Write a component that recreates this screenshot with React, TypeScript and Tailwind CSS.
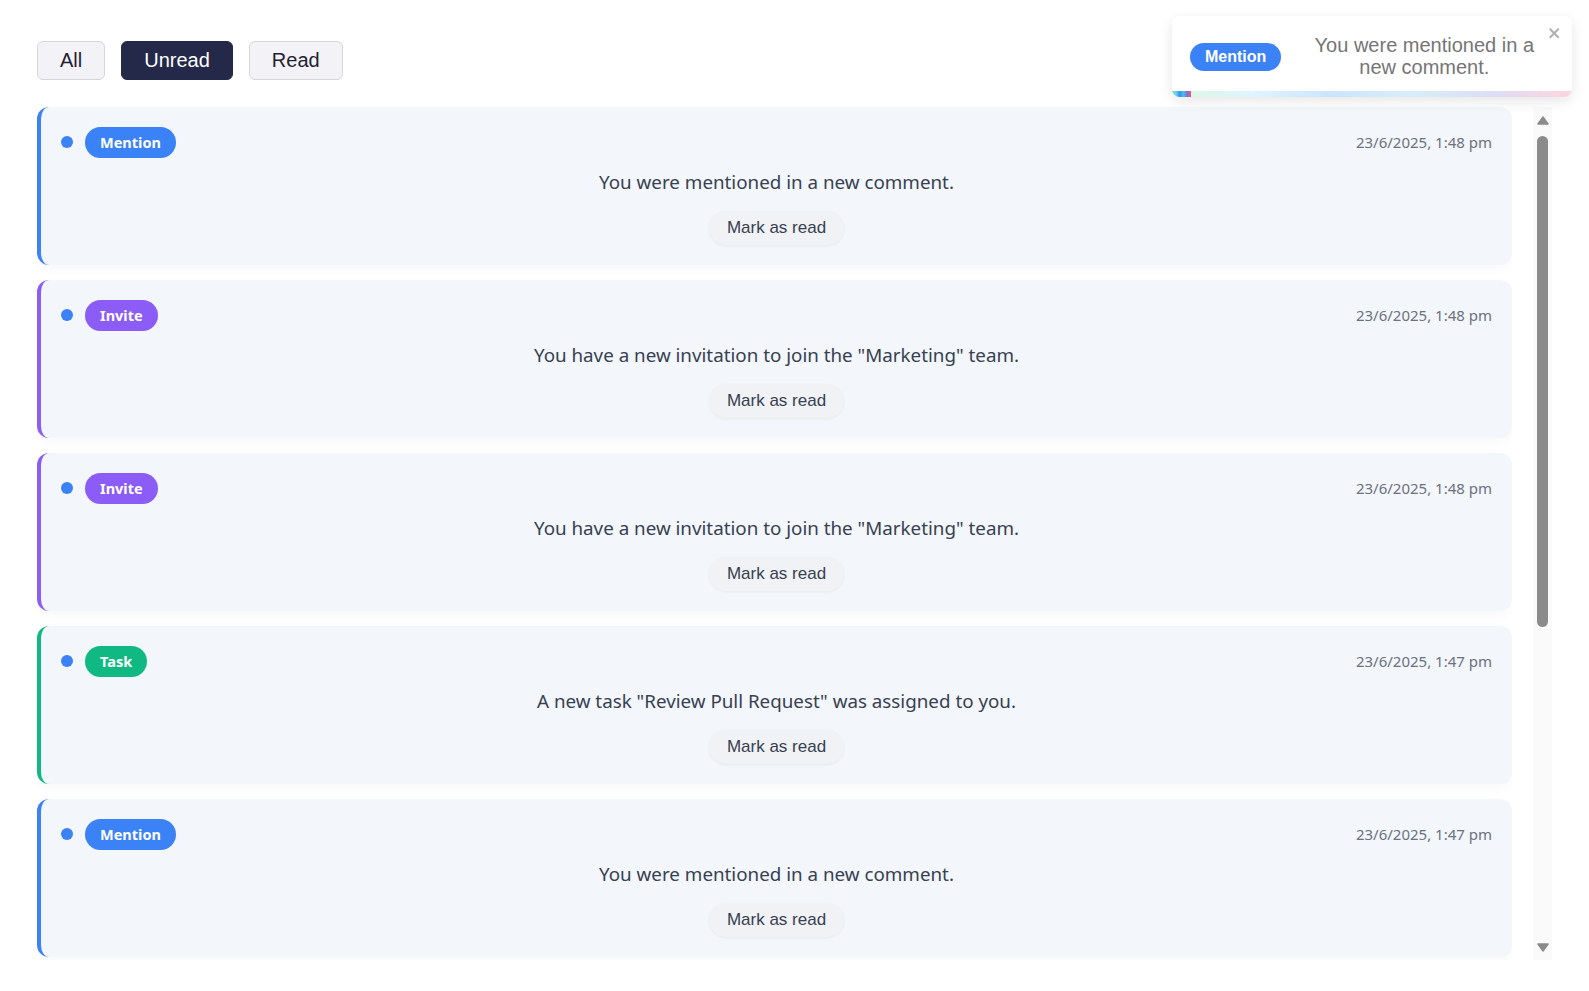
import { useState } from "react";

type Kind = "Mention" | "Invite" | "Task";

const kindStyles: Record<Kind, { border: string; badge: string }> = {
  Mention: { border: "border-l-[#3b82f6]", badge: "bg-[#3b82f6]" },
  Invite: { border: "border-l-[#8b5cf6]", badge: "bg-[#8b5cf6]" },
  Task: { border: "border-l-[#10b981]", badge: "bg-[#10b981]" },
};

const notifications: { id: number; kind: Kind; message: string; time: string }[] = [
  { id: 1, kind: "Mention", message: "You were mentioned in a new comment.", time: "23/6/2025, 1:48 pm" },
  { id: 2, kind: "Invite", message: 'You have a new invitation to join the "Marketing" team.', time: "23/6/2025, 1:48 pm" },
  { id: 3, kind: "Invite", message: 'You have a new invitation to join the "Marketing" team.', time: "23/6/2025, 1:48 pm" },
  { id: 4, kind: "Task", message: 'A new task "Review Pull Request" was assigned to you.', time: "23/6/2025, 1:47 pm" },
  { id: 5, kind: "Mention", message: "You were mentioned in a new comment.", time: "23/6/2025, 1:47 pm" },
];

const filters = ["All", "Unread", "Read"];

const Arrow = ({ down }: { down?: boolean }) => (
  <div className="h-[26px] flex items-center justify-center">
    <svg width="12" height="9" viewBox="0 0 12 9" aria-hidden="true" className={down ? "rotate-180" : ""}>
      <path d="M6 1 L11 8 L1 8 Z" fill="#8b8b8b" stroke="#8b8b8b" strokeWidth="1.5" strokeLinejoin="round" />
    </svg>
  </div>
);

const Toast = () => (
  <div className="absolute top-4 right-[17px] w-[400px] h-[81px] bg-white rounded-lg shadow-[0_4px_14px_rgba(0,0,0,0.1)] overflow-hidden flex items-center pl-[18px] font-['Liberation_Sans',Arial,sans-serif]">
    <span className="shrink-0 h-7 px-[15px] rounded-full bg-[#3b82f6] text-white font-bold text-base leading-7">
      Mention
    </span>
    <div className="ml-4 -mt-[2px] w-[254px] text-center text-[20px] leading-[22px] text-[#757575]">
      You were mentioned in a new comment.
    </div>
    <button className="absolute top-[9px] right-[10px] opacity-30">
      <svg width="14" height="16" viewBox="0 0 14 16" aria-hidden="true">
        <path
          fillRule="evenodd"
          d="M7.71 8.23l3.75 3.75-1.48 1.48-3.75-3.75-3.75 3.75L1 11.98l3.75-3.75L1 4.48 2.48 3l3.75 3.75L9.98 3l1.48 1.48-3.75 3.75z"
        />
      </svg>
    </button>
    <div className="absolute left-0 bottom-0 h-[6px] w-full opacity-20 bg-[linear-gradient(to_right,#4cd964,#5ac8fa,#007aff,#34aadc,#5856d6,#ff2d55)]" />
    <div className="absolute left-0 bottom-0 h-[6px] w-[19px] opacity-80 bg-[linear-gradient(to_right,#4cd964,#5ac8fa,#007aff,#34aadc,#5856d6,#ff2d55)]" />
  </div>
);

export default function App() {
  const [filter, setFilter] = useState("Unread");

  return (
    <div className="relative h-screen flex flex-col bg-white px-[37px] pt-[41px] pb-[31px] font-['Noto_Sans',sans-serif]">
      <div className="flex gap-4">
        {filters.map((f) => (
          <button
            key={f}
            onClick={() => setFilter(f)}
            className={`px-[22px] py-[7px] rounded-md border text-[20px] leading-[23px] font-['Liberation_Sans',Arial,sans-serif] ${
              filter === f
                ? "bg-[#242849] border-[#242849] text-white"
                : "bg-[#f3f3f7] border-[#d5d5dc] text-[#1f2233]"
            }`}
          >
            {f}
          </button>
        ))}
      </div>

      <div className="mt-[27px] flex-1 min-h-0 flex gap-[21px]">
        <div className="flex-1 min-w-0 overflow-hidden flex flex-col gap-[15px]">
          {notifications.map((n) => (
            <div
              key={n.id}
              className={`shrink-0 bg-[#f3f6fb] rounded-xl border-l-4 ${kindStyles[n.kind].border} px-5 pt-5 pb-5 shadow-[0_4px_12px_rgba(0,0,0,0.03)]`}
            >
              <div className="flex items-center justify-between h-[31px]">
                <div className="flex items-center gap-3">
                  <span className="w-3 h-3 -mt-[2px] rounded-full bg-[#3b82f6]" />
                  <span
                    className={`h-[31px] px-[15px] rounded-full ${kindStyles[n.kind].badge} text-white font-bold text-[14.5px] leading-[31px]`}
                  >
                    {n.kind}
                  </span>
                </div>
                <span className="text-[15px] text-[#6b7280]">{n.time}</span>
              </div>
              <p className="mt-[11px] text-center text-[18.8px] leading-[27px] text-[#374151]">{n.message}</p>
              <div className="mt-[15px] flex justify-center">
                <button className="h-[34px] px-[18px] rounded-full bg-[#f1f2f5] shadow-[0_1px_3px_rgba(0,0,0,0.06)] text-[17px] leading-[34px] text-[#374151] font-['Liberation_Sans',Arial,sans-serif]">
                  Mark as read
                </button>
              </div>
            </div>
          ))}
        </div>

        <div className="w-[19px] shrink-0 bg-[#fafafa] flex flex-col">
          <Arrow />
          <div className="mt-[3px] mx-auto w-[11px] h-[491px] rounded-full bg-[#8b8b8b]" />
          <div className="flex-1" />
          <Arrow down />
        </div>
      </div>

      <Toast />
    </div>
  );
}
